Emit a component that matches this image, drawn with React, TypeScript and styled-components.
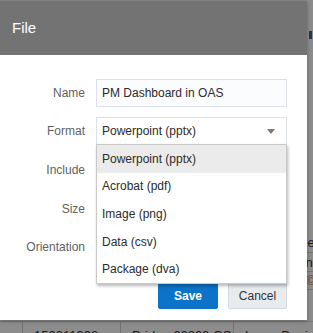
import React from "react";
import styled, { createGlobalStyle } from "styled-components";

const GlobalStyle = createGlobalStyle`
  html, body {
    margin: 0;
    padding: 0;
    background: #ffffff;
  }
  body {
    font-family: "Liberation Sans", Arial, sans-serif;
  }
`;

const formats = [
  "Powerpoint (pptx)",
  "Acrobat (pdf)",
  "Image (png)",
  "Data (csv)",
  "Package (dva)",
];

const Screen = styled.div`
  position: relative;
  width: 313px;
  height: 333px;
  overflow: hidden;
  background: #ffffff;
`;

// page that sits behind the modal
const Page = styled.div`
  display: flex;
  flex-direction: column;
  font-size: 13px;
  color: #333;
`;

const PageBadge = styled.div`
  margin: 31px 0 0 309px;
  width: 3px;
  height: 8px;
  background: #1f74b8;
`;

const SideRows = styled.div`
  margin-top: 194px;
  display: flex;
  flex-direction: column;
`;

const SideRow = styled.div<{ $indent: number; $h: number; $color?: string }>`
  height: ${(p) => p.$h}px;
  padding-left: ${(p) => p.$indent}px;
  display: flex;
  align-items: center;
  white-space: nowrap;
  color: ${(p) => p.$color || "#333"};
  border-bottom: 1px solid #d8d8d8;
`;

const BottomRow = styled.div`
  margin-top: 31px;
  height: 24px;
  display: grid;
  grid-template-columns: 22px 98px 113px 1fr;
  border-top: 1px solid #d8d8d8;
`;

const Cell = styled.div`
  padding: 6px 0 0 11px;
  border-left: 1px solid #cfcfcf;
  white-space: nowrap;
  overflow: hidden;
  &:first-child {
    border-left: none;
  }
`;

const Overlay = styled.div`
  position: absolute;
  inset: 0;
  background: rgba(0, 0, 0, 0.45);
`;

const Dialog = styled.div`
  position: absolute;
  top: 1px;
  left: 0;
  width: 307px;
  height: 319px;
  background: #ffffff;
  display: flex;
  flex-direction: column;
  box-shadow: 0 1px 4px rgba(0, 0, 0, 0.3);
`;

const Header = styled.div`
  height: 54px;
  flex: none;
  background: #737373;
  color: #ffffff;
  font-size: 15px;
  display: flex;
  align-items: center;
  padding: 0 0 2px 12px;
  box-sizing: border-box;
`;

const Body = styled.div`
  padding: 24px 20px 0 0;
  display: flex;
  flex-direction: column;
  gap: 10px;
`;

const Row = styled.div<{ $h?: number }>`
  display: grid;
  grid-template-columns: 85px 1fr;
  column-gap: 11px;
  align-items: center;
  height: ${(p) => p.$h || 28}px;
`;

const Label = styled.label`
  text-align: right;
  font-size: 12px;
  color: #5f5f5f;
  white-space: nowrap;
`;

const TextInput = styled.div`
  height: 28px;
  box-sizing: border-box;
  border: 1px solid #dbe1e6;
  background: #fbfcfe;
  padding-left: 5px;
  display: flex;
  align-items: center;
  font-size: 12px;
  color: #2b2b2b;
`;

const SelectWrap = styled.div`
  position: relative;
`;

const SelectBox = styled.div`
  height: 28px;
  box-sizing: border-box;
  border: 1px solid #dbe1e6;
  background: #ffffff;
  padding: 0 11px 0 5px;
  display: flex;
  align-items: center;
  justify-content: space-between;
  font-size: 12px;
  color: #2b2b2b;
`;

const Caret = styled.span`
  width: 0;
  height: 0;
  border-left: 4.5px solid transparent;
  border-right: 4.5px solid transparent;
  border-top: 5px solid #7a7a7a;
`;

const Menu = styled.ul`
  position: absolute;
  top: 27px;
  left: 0;
  right: 0;
  margin: 0;
  padding: 0;
  list-style: none;
  background: #ffffff;
  border: 1px solid #c9c9c9;
  box-shadow: 1px 2px 3px rgba(0, 0, 0, 0.28);
  z-index: 2;
`;

const MenuItem = styled.li<{ $active?: boolean }>`
  height: 27.6px;
  display: flex;
  align-items: center;
  padding-left: 5px;
  font-size: 12px;
  color: #2b2b2b;
  background: ${(p) => (p.$active ? "#ebebeb" : "transparent")};
`;

const Buttons = styled.div`
  margin-top: 12px;
  display: flex;
  justify-content: flex-end;
  gap: 10px;
`;

const Button = styled.button<{ $primary?: boolean }>`
  height: 26px;
  box-sizing: border-box;
  font-family: inherit;
  font-size: 12px;
  padding: 0;
  border-radius: 2px;
  width: ${(p) => (p.$primary ? 60 : 59)}px;
  font-weight: ${(p) => (p.$primary ? 700 : 400)};
  color: ${(p) => (p.$primary ? "#ffffff" : "#333")};
  background: ${(p) => (p.$primary ? "#0c73c9" : "#e7ebee")};
  border: 1px solid ${(p) => (p.$primary ? "#0c73c9" : "#d3dade")};
`;

export default function App() {
  return (
    <>
      <GlobalStyle />
      <Screen>
        <Page>
          <PageBadge />
          <SideRows>
            <SideRow $indent={280} $h={19}>
              Name
            </SideRow>
            <SideRow $indent={278} $h={18}>
              Techni
            </SideRow>
            <SideRow $indent={306} $h={17} $color="#c9782a">
              ©
            </SideRow>
          </SideRows>
          <BottomRow>
            <Cell />
            <Cell>152311993</Cell>
            <Cell>Bridge 62800 OSS</Cell>
            <Cell>Leon, Denise</Cell>
          </BottomRow>
        </Page>
        <Overlay />
        <Dialog>
          <Header>File</Header>
          <Body>
            <Row>
              <Label>Name</Label>
              <TextInput>PM Dashboard in OAS</TextInput>
            </Row>
            <Row>
              <Label>Format</Label>
              <SelectWrap>
                <SelectBox>
                  <span>Powerpoint (pptx)</span>
                  <Caret />
                </SelectBox>
                <Menu>
                  {formats.map((f, i) => (
                    <MenuItem key={f} $active={i === 0}>
                      {f}
                    </MenuItem>
                  ))}
                </Menu>
              </SelectWrap>
            </Row>
            <Row $h={30}>
              <Label>Include</Label>
            </Row>
            <Row>
              <Label>Size</Label>
            </Row>
            <Row>
              <Label>Orientation</Label>
            </Row>
            <Buttons>
              <Button $primary>Save</Button>
              <Button>Cancel</Button>
            </Buttons>
          </Body>
        </Dialog>
      </Screen>
    </>
  );
}
